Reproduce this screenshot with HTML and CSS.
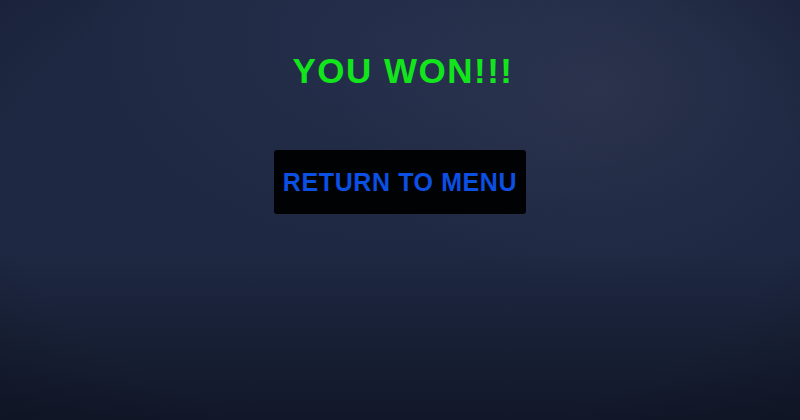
FILE: index.html
```html
<!DOCTYPE html>
<html lang="en">
<head>
    <meta charset="UTF-8">
    <meta name="viewport" content="width=device-width, initial-scale=1.0">
    <title>You Won</title>
    <link rel="stylesheet" href="styles.css">
</head>
<body>
    <main class="screen">
        <h1 class="title">YOU WON!!!</h1>
        <button type="button" class="menu-btn">RETURN TO MENU</button>
    </main>
</body>
</html>
```

FILE: styles.css
```css
/* Général */
* {
    margin: 0;
    padding: 0;
    box-sizing: border-box;
}

html, body {
    height: 100%;
}

body {
    font-family: 'Liberation Sans', Arial, sans-serif;
    background-color: #1e2842;
    background-image:
        radial-gradient(ellipse 260px 200px at 600px 90px, rgba(60, 64, 90, 0.4), transparent),
        radial-gradient(ellipse 300px 220px at 380px 40px, rgba(50, 62, 95, 0.3), transparent),
        linear-gradient(180deg, rgba(0, 0, 0, 0) 60%, rgba(5, 8, 16, 0.5) 100%),
        radial-gradient(ellipse 720px 430px at 400px 190px, transparent 55%, rgba(8, 12, 22, 0.5) 100%);
    overflow: hidden;
}

/* Écran de victoire */
.screen {
    display: flex;
    flex-direction: column;
    align-items: center;
    padding-top: 52px;
}

.title {
    color: #12e51c;
    font-size: 35px;
    font-weight: bold;
    line-height: 38px;
    letter-spacing: 1.5px;
    margin-left: 6px;
}

.menu-btn {
    margin-top: 60px;
    width: 252px;
    height: 64px;
    background-color: #010203;
    border: none;
    border-radius: 3px;
    color: #0b4fe3;
    font-family: 'Liberation Sans', Arial, sans-serif;
    font-size: 25px;
    font-weight: bold;
    letter-spacing: 0.6px;
    cursor: pointer;
}
```
